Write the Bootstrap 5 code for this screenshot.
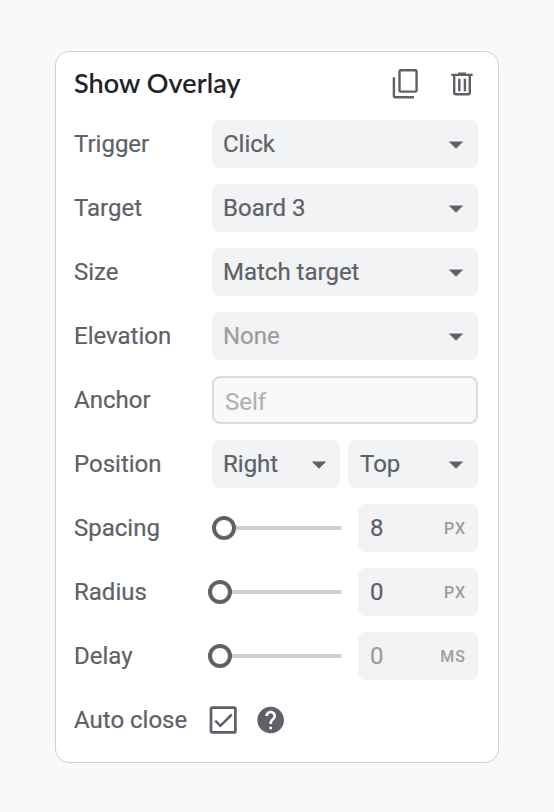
<!DOCTYPE html>
<html lang="en">
<head>
<meta charset="utf-8">
<meta name="viewport" content="width=device-width, initial-scale=1">
<title>Show Overlay</title>
<link href="https://cdn.jsdelivr.net/npm/bootstrap@5.3.0/dist/css/bootstrap.min.css" rel="stylesheet">
<style>
body { background: #f8f9fb; font-family: Roboto, "Liberation Sans", sans-serif; font-size: 24px; line-height: 48px; color: #5f6168; overflow: hidden; -webkit-text-stroke: .2px currentColor; }
.panel { width: 444px; height: 712px; margin: 51px 0 0 55px; padding: 8px 20px 0 18px; border: 1px solid #d0d1d2; border-radius: 14px; }
.panel-head { height: 48px; margin-bottom: 12px; }
.panel-title { font-family: Lato, "Open Sans", sans-serif; font-size: 27px; font-weight: 500; line-height: 46px; height: 48px; color: #202124; letter-spacing: .1px; }
.line { height: 48px; }
.line-label { width: 138px; flex: none; }
.field { height: 48px; background: #f1f3f4; border-radius: 8px; padding: 0 14px 0 11px; border: 0; color: inherit; }
.field-pos { width: 128px; padding-right: 13px; }
.muted-text { color: #9b9d9f; }
.anchor-input { height: 48px; border: 2px solid #dadce0; border-radius: 8px; background: #f9f9f9; padding: 2px 11px 0; font-size: 24px; line-height: 42px; padding-top: 4px; color: #5f6168; }
.anchor-input::placeholder { color: #b0b2b4; opacity: 1; }
.caret { width: 16px; height: 8px; flex: none; margin-top: 1px; }
.icon-copy { margin-right: 30px; }
.icon-trash { margin-right: 4px; }
.icon-check { margin-left: -3px; }
.icon-help { margin-left: 15px; }
.slider { width: 134px; height: 24px; margin-left: -4px; }
.slider-track { width: 126px; height: 4px; margin-left: 8px; border-radius: 2px; background: #cdcfd1; }
.slider-thumb { width: 24px; height: 24px; border: 4px solid #5f6168; background: #fff; top: 0; left: 0; }
.thumb-eight { left: 4px; }
.thumb-zero { left: 0; }
.num-field { width: 120px; padding: 0 12px; }
.unit { font-size: 16px; font-weight: 500; letter-spacing: 1px; color: #9b9d9f; padding-top: 1px; -webkit-text-stroke: 0; }
svg { display: block; }
</style>
</head>
<body>
<main class="panel bg-white">
  <header class="panel-head d-flex align-items-center">
    <h1 class="panel-title m-0 me-auto">Show Overlay</h1>
    <svg class="icon-copy" width="28" height="32" viewBox="0 0 28 32" fill="none" stroke="#5f6168" stroke-width="2.4" aria-label="Duplicate"><rect x="7.5" y="2.2" width="17.1" height="21.4" rx="1.2"/><path d="M1.9 9.3v18.5q0 1.5 1.5 1.5H22"/></svg>
    <svg class="icon-trash" width="24" height="28" viewBox="0 0 24 28" fill="none" stroke="#5f6168" stroke-width="2.4" aria-label="Delete"><path d="M4.2 5.5v17.3q0 1.5 1.5 1.5h12.6q1.5 0 1.5-1.5V5.5M1.3 4.9h21.4"/><path d="M8 3.6h8M9.3 8.8v12.4M14.9 8.8v12.4"/></svg>
  </header>
  <div class="vstack gap-3">
    <div class="line d-flex"><span class="line-label">Trigger</span><div class="field flex-fill d-flex align-items-center justify-content-between">Click<svg class="caret" viewBox="0 0 16 8"><path fill="#5f6168" d="M.7.5h14.6L8 7.8z"/></svg></div></div>
    <div class="line d-flex"><span class="line-label">Target</span><div class="field flex-fill d-flex align-items-center justify-content-between">Board 3<svg class="caret" viewBox="0 0 16 8"><path fill="#5f6168" d="M.7.5h14.6L8 7.8z"/></svg></div></div>
    <div class="line d-flex"><span class="line-label">Size</span><div class="field flex-fill d-flex align-items-center justify-content-between">Match target<svg class="caret" viewBox="0 0 16 8"><path fill="#5f6168" d="M.7.5h14.6L8 7.8z"/></svg></div></div>
    <div class="line d-flex"><span class="line-label">Elevation</span><div class="field muted-text flex-fill d-flex align-items-center justify-content-between">None<svg class="caret" viewBox="0 0 16 8"><path fill="#5f6168" d="M.7.5h14.6L8 7.8z"/></svg></div></div>
    <div class="line d-flex"><label class="line-label" for="anchor">Anchor</label><input id="anchor" class="anchor-input form-control" placeholder="Self"></div>
    <div class="line d-flex"><span class="line-label">Position</span>
      <div class="d-flex flex-fill gap-2">
        <div class="field field-pos d-flex align-items-center justify-content-between">Right<svg class="caret" viewBox="0 0 16 8"><path fill="#5f6168" d="M.7.5h14.6L8 7.8z"/></svg></div>
        <div class="field flex-fill d-flex align-items-center justify-content-between ps-2"><span class="ps-1">Top</span><svg class="caret" viewBox="0 0 16 8"><path fill="#5f6168" d="M.7.5h14.6L8 7.8z"/></svg></div>
      </div>
    </div>
    <div class="line d-flex align-items-center"><span class="line-label">Spacing</span><div class="slider position-relative d-flex align-items-center"><div class="slider-track"></div><div class="slider-thumb thumb-eight rounded-circle position-absolute"></div></div><div class="field num-field ms-auto d-flex align-items-center justify-content-between">8<span class="unit">PX</span></div></div>
    <div class="line d-flex align-items-center"><span class="line-label">Radius</span><div class="slider position-relative d-flex align-items-center"><div class="slider-track"></div><div class="slider-thumb thumb-zero rounded-circle position-absolute"></div></div><div class="field num-field ms-auto d-flex align-items-center justify-content-between">0<span class="unit">PX</span></div></div>
    <div class="line d-flex align-items-center"><span class="line-label">Delay</span><div class="slider position-relative d-flex align-items-center"><div class="slider-track"></div><div class="slider-thumb thumb-zero rounded-circle position-absolute"></div></div><div class="field num-field muted-text ms-auto d-flex align-items-center justify-content-between">0<span class="unit">MS</span></div></div>
    <div class="line d-flex align-items-center"><span class="line-label">Auto close</span>
      <svg class="icon-check" width="28" height="28" viewBox="0 0 28 28" fill="none" stroke="#5f6168" aria-label="Checked"><rect x="2" y="1.6" width="24.4" height="24.8" rx="1.5" stroke-width="2.7"/><path d="M6.2 14.7l5.2 5.1L22.8 8.5" stroke-width="2.5"/></svg>
      <svg class="icon-help" width="36" height="32" viewBox="-2 0 27 24" aria-label="Help"><path fill="#5f6168" d="M12 2C6.48 2 2 6.48 2 12s4.48 10 10 10 10-4.48 10-10S17.52 2 12 2zm1 17h-2v-2h2v2zm2.07-7.75l-.9.92C13.45 12.9 13 13.5 13 15h-2v-.5c0-1.1.45-2.1 1.17-2.83l1.24-1.26c.37-.36.59-.86.59-1.41 0-1.1-.9-2-2-2s-2 .9-2 2H8c0-2.21 1.79-4 4-4s4 1.79 4 4c0 .88-.36 1.68-.93 2.25z"/></svg>
    </div>
  </div>
</main>
<script src="https://cdn.jsdelivr.net/npm/bootstrap@5.3.0/dist/js/bootstrap.bundle.min.js"></script>
</body>
</html>
